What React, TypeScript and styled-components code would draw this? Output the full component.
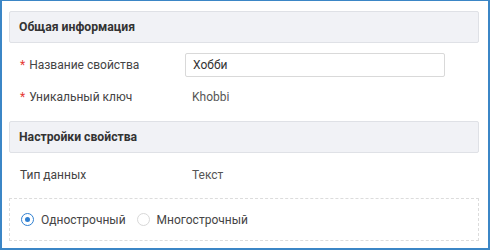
import React, { useState } from "react";
import styled, { createGlobalStyle } from "styled-components";

const GlobalStyle = createGlobalStyle`
  body {
    margin: 0;
    font-family: Roboto, "Liberation Sans", sans-serif;
    font-size: 12px;
    color: #333333;
  }
`;

const Panel = styled.div`
  box-sizing: border-box;
  width: 490px;
  height: 250px;
  border: 2px solid #3b86c6;
  border-top-width: 1px;
  padding: 10px 9px 0 7px;
  background-color: #ffffff;
`;

const SectionHeader = styled.div`
  box-sizing: border-box;
  height: 32px;
  display: flex;
  align-items: center;
  padding: 0 9px;
  background-color: #f1f2f6;
  border: 1px solid #dfe1e6;
  border-radius: 2px;
  font-size: 12.2px;
  font-weight: 700;
  color: #333333;
`;

const SectionBody = styled.div<{ top: number; bottom: number }>`
  padding: ${(p) => p.top}px 0 ${(p) => p.bottom}px 0;
`;

const Row = styled.div`
  display: grid;
  grid-template-columns: 176px 260px;
  align-items: center;
  height: 32px;
`;

const Label = styled.div`
  padding-left: 11px;
  color: #444444;
`;

const Required = styled.span`
  color: #e53935;
  margin-right: 4px;
`;

const Value = styled.div`
  padding-left: 7px;
  color: #555555;
`;

const TextInput = styled.input`
  box-sizing: border-box;
  width: 260px;
  height: 24px;
  padding: 0 7px;
  border: 1px solid #d9d9d9;
  border-radius: 2px;
  font-family: inherit;
  font-size: 12px;
  color: #333333;
  outline: none;
`;

const OptionBox = styled.div`
  box-sizing: border-box;
  height: 43px;
  margin-top: 7px;
  display: flex;
  align-items: center;
  gap: 11px;
  padding-left: 11px;
  border: 1px dashed #dcdcdc;
`;

const Option = styled.label`
  display: flex;
  align-items: center;
  gap: 7px;
  cursor: pointer;
  color: #444444;
`;

const Ring = styled.span<{ checked: boolean }>`
  box-sizing: border-box;
  width: 13px;
  height: 13px;
  border-radius: 50%;
  border: 1px solid ${(p) => (p.checked ? "#2f7fd1" : "#d8d8d8")};
  display: flex;
  align-items: center;
  justify-content: center;

  &::after {
    content: "";
    width: 5px;
    height: 5px;
    border-radius: 50%;
    background-color: #2f7fd1;
    display: ${(p) => (p.checked ? "block" : "none")};
  }
`;

const App = () => {
  const [name, setName] = useState("Хобби");
  const [mode, setMode] = useState("single");

  return (
    <>
      <GlobalStyle />
      <Panel>
        <SectionHeader>Общая информация</SectionHeader>
        <SectionBody top={6} bottom={8}>
          <Row>
            <Label>
              <Required>*</Required>Название свойства
            </Label>
            <TextInput value={name} onChange={(e) => setName(e.target.value)} />
          </Row>
          <Row>
            <Label>
              <Required>*</Required>Уникальный ключ
            </Label>
            <Value>Khobbi</Value>
          </Row>
        </SectionBody>
        <SectionHeader>Настройки свойства</SectionHeader>
        <SectionBody top={6} bottom={0}>
          <Row>
            <Label>Тип данных</Label>
            <Value>Текст</Value>
          </Row>
          <OptionBox>
            <Option onClick={() => setMode("single")}>
              <Ring checked={mode === "single"} />
              Однострочный
            </Option>
            <Option onClick={() => setMode("multi")}>
              <Ring checked={mode === "multi"} />
              Многострочный
            </Option>
          </OptionBox>
        </SectionBody>
      </Panel>
    </>
  );
};

export default App;
